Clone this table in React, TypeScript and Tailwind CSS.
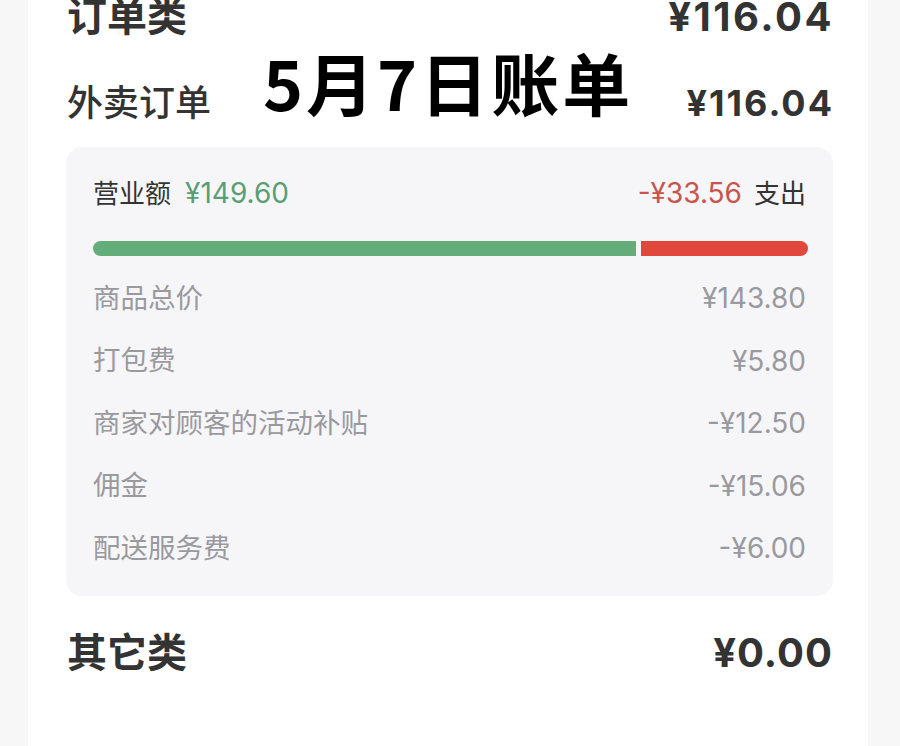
const rows = [
    { label: '商品总价', value: '¥143.80' },
    { label: '打包费', value: '¥5.80' },
    { label: '商家对顾客的活动补贴', value: '-¥12.50' },
    { label: '佣金', value: '-¥15.06' },
    { label: '配送服务费', value: '-¥6.00' },
]

const font = { fontFamily: 'Inter, "Noto Sans CJK SC", sans-serif' }

const App = () => {
    return (
        <div style={font} className="relative w-[900px] h-[746px] overflow-hidden bg-[#f7f7f7]">
            <div className="ml-[28px] mr-[32px] h-full flex flex-col bg-white pl-[39px] pr-[36px] text-[#333]">
                <div className="-mt-[3px] h-[40px] flex items-center justify-between">
                    <span className="text-[40px] font-bold">订单类</span>
                    <span className="text-[40px] font-bold tracking-[2.5px] -mr-[2px]">¥116.04</span>
                </div>
                <div className="mt-[46px] h-[40px] flex items-center justify-between">
                    <span className="text-[36px] font-medium">外卖订单</span>
                    <span className="text-[36px] font-bold tracking-[2px] -mr-[2px]">¥116.04</span>
                </div>

                <div className="mt-[24px] -mx-[1px] rounded-[16px] bg-[#f6f6f9] pt-[28px] px-[27px] pb-[16px]">
                    <div className="h-[36px] flex items-center justify-between">
                        <div className="flex items-center gap-[14px]">
                            <span className="text-[26px] text-[#333]">营业额</span>
                            <span className="text-[28px] text-[#5a9e73]">¥149.60</span>
                        </div>
                        <div className="flex items-center gap-[12px]">
                            <span className="text-[28px] text-[#c9544c]">-¥33.56</span>
                            <span className="text-[26px] text-[#333]">支出</span>
                        </div>
                    </div>
                    <div className="mt-[30px] h-[15px] flex gap-[5px] -mr-[2px]">
                        <div className="flex-1 rounded-l-full bg-[#63ad78]"></div>
                        <div className="w-[167px] rounded-r-full bg-[#e1473a]"></div>
                    </div>
                    <div className="mt-[11px]">
                        {rows.map((row, index) => (
                            <div key={index} className="h-[62.5px] flex items-center justify-between text-[#9a9a9e]">
                                <span className="text-[27.5px]">{row.label}</span>
                                <span className="text-[28px]">{row.value}</span>
                            </div>
                        ))}
                    </div>
                </div>

                <div className="mt-[37px] h-[40px] flex items-center justify-between">
                    <span className="text-[40px] font-bold">其它类</span>
                    <span className="text-[40px] font-bold tracking-[1px] -mr-[1px]">¥0.00</span>
                </div>
            </div>

            <div className="absolute left-[263px] top-[31px] text-[68px] font-bold text-black tracking-[3px]" style={{ fontFamily: '"Noto Sans CJK SC", sans-serif' }}>
                5月7日账单
            </div>
        </div>
    )
}

export default App
